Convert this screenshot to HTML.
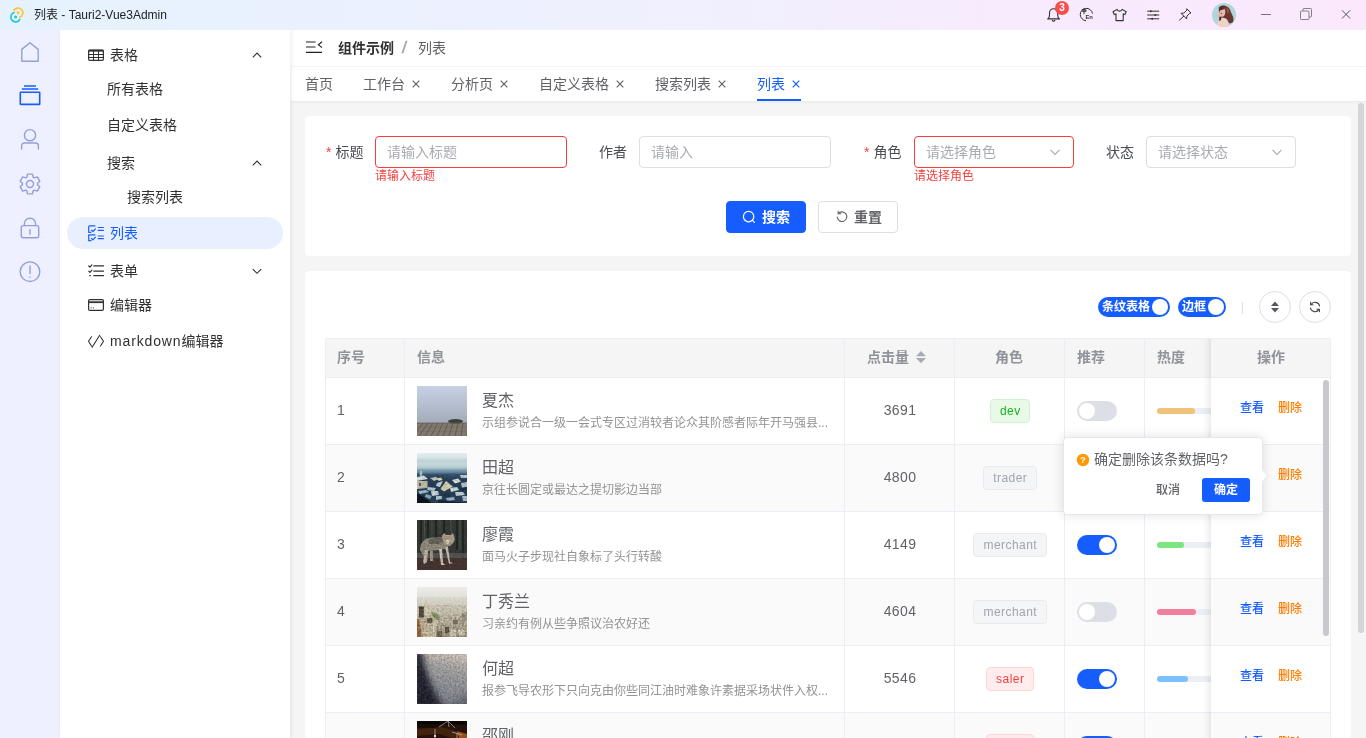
<!DOCTYPE html>
<html lang="zh-CN">
<head>
<meta charset="utf-8">
<title>列表 - Tauri2-Vue3Admin</title>
<style>
*{box-sizing:border-box;margin:0;padding:0}
html,body{width:1366px;height:738px;overflow:hidden;background:#fff}
body{font-family:"Liberation Sans","Noto Sans CJK SC",sans-serif;font-size:14px;color:#303133;position:relative}
.abs{position:absolute}
svg{display:block}
/* title bar */
#titlebar{position:absolute;left:0;top:0;width:1366px;height:30px;z-index:5;background:linear-gradient(90deg,#e5f2fe 0%,#f0f0fe 50%,#f7ebfd 74%,#fbe8fd 100%)}
#titlebar .ttl{position:absolute;left:34px;top:0;line-height:30px;font-size:12px;color:#222}
/* rail */
#rail{position:absolute;left:0;top:30px;width:60px;height:708px;background:#eef0ff}
/* side menu */
#side{position:absolute;left:60px;top:30px;width:230px;height:708px;background:#fff;box-shadow:1px 0 4px rgba(0,0,0,.09);z-index:2}
.mi{position:absolute;font-size:14px;color:#303133;line-height:20px;white-space:nowrap}
/* main */
#main{position:absolute;left:291px;top:30px;width:1075px;height:708px;background:#f5f5f5}
#crumb{position:absolute;left:0;top:0;width:1075px;height:37px;background:#fff;border-bottom:1px solid #f5f5f7}
#tabs{position:absolute;left:0;top:37px;width:1075px;height:34px;background:#fff;box-shadow:0 1px 3px rgba(0,0,0,.06)}
.tab{position:absolute;top:0;line-height:34px;font-size:14px;color:#606266;white-space:nowrap}
.tab .x{display:inline-block;margin-left:7px;vertical-align:1px}

.lbl{position:absolute;top:20px;line-height:32px;font-size:14px;color:#4a4d54;white-space:nowrap}
.lbl i{font-style:normal;color:#f53f3f;margin-right:4px}
.inp{position:absolute;top:20px;height:32px;border:1px solid #dcdfe6;border-radius:4px;background:#fff;line-height:30px;padding-left:11px;font-size:14px;color:#a8abb2;white-space:nowrap}
.inp.err{border-color:#f53f3f}
.errt{position:absolute;top:54px;font-size:12px;line-height:12px;color:#f53f3f;white-space:nowrap}
.btn{position:absolute;top:85px;width:80px;height:32px;border-radius:4px;font-size:14px;font-weight:bold;line-height:30px}

#tbl{position:absolute;left:34px;top:308px;width:1006px;height:400px;overflow:hidden;font-size:14px;color:#606266}
#tbl .hd{position:absolute;left:0;top:0;width:1006px;height:40px;background:#f5f5f5;border-bottom:1px solid #ebeef5}
#tbl .row{position:absolute;left:0;width:1006px;height:67px;border-bottom:1px solid #ebeef5;background:#fff}
#tbl .row.s{background:#fafafa}
#tbl .vl{position:absolute;top:0;width:1px;height:400px;background:#ebeef5}
#tbl .th{position:absolute;top:8px;line-height:23px;font-weight:bold;color:#909399;white-space:nowrap}
.idx{position:absolute;left:12px;top:21px;line-height:23px}
.pic{position:absolute;left:92px;top:8px;width:50px;height:50px;overflow:hidden}
.nm{position:absolute;left:157px;top:12px;font-size:16px;line-height:22px;color:#606266;white-space:nowrap}
.ds{position:absolute;left:157px;top:36px;font-size:12px;line-height:18px;color:#939393;white-space:nowrap}
.hit{position:absolute;left:520px;width:110px;top:21px;line-height:23px;text-align:center;letter-spacing:.35px}
.tagw{position:absolute;left:630px;width:110px;top:21px;height:24px;text-align:center}
.tag{display:inline-block;height:24px;line-height:22px;padding:0 8.500px 0 9px;font-size:12px;letter-spacing:.45px;border-radius:4px;border:1px solid #e9eaee;background:#f4f5f7;color:#a0a4af}
.tag.g{background:#e8f9e8;border-color:#d1f2d1;color:#18b318}
.tag.r{background:#ffeded;border-color:#fdd6d6;color:#f53f3f}
.sw{position:absolute;left:752px;top:23px;width:40px;height:20px;border-radius:10px;background:#dcdfe6}
.sw::after{content:"";position:absolute;left:2px;top:2px;width:16px;height:16px;border-radius:8px;background:#fff}
.sw.on{background:#165dff}
.sw.on::after{left:22px}
.pg{position:absolute;left:832px;top:30px;width:90px;height:6px;border-radius:3px;background:#ebeef5}
.pg i{position:absolute;left:0;top:0;height:6px;border-radius:3px}
#fix{position:absolute;left:886px;top:0;width:120px;height:400px}
#fix::before{content:"";position:absolute;left:-10px;top:0;width:10px;height:400px;box-shadow:inset -10px 0 10px -10px rgba(0,0,0,.15)}
#fix .fr{position:absolute;left:0;width:120px;height:67px;border-bottom:1px solid #ebeef5;background:#fff;font-size:12px;font-weight:500}
#fix .fr.s{background:#fafafa}
#fix .fr b{position:absolute;top:20px;line-height:20px;font-weight:500}
#fix .fr .v{left:29px;color:#165dff}
#fix .fr .d{left:67px;color:#ff7d00}
.tsw{position:absolute;top:26px;font-weight:bold;height:20px;border-radius:10px;background:#165dff;color:#fff;font-size:12px;line-height:20px;padding-left:4px;white-space:nowrap}
.tsw::after{content:"";position:absolute;right:2px;top:2px;width:16px;height:16px;border-radius:8px;background:#fff}
.cb{position:absolute;top:20px;width:32px;height:32px;border-radius:16px;border:1px solid #dcdfe6;background:#fff}
.card{position:absolute;background:#fff;border-radius:4px}
</style>
</head>
<body><div id="app" style="position:absolute;left:0;top:0;width:1366px;height:738px;will-change:transform">
<svg width="0" height="0" style="position:absolute"><defs>
<filter id="b1" x="-10%" y="-10%" width="120%" height="120%"><feGaussianBlur stdDeviation=".7"/></filter>
<filter id="b3" x="-30%" y="-30%" width="160%" height="160%"><feGaussianBlur stdDeviation="3"/></filter>
<filter id="b2" x="-10%" y="-10%" width="120%" height="120%"><feGaussianBlur stdDeviation="1"/></filter>
<filter id="nz" x="0" y="0" width="100%" height="100%"><feTurbulence type="fractalNoise" baseFrequency=".55" numOctaves="2" seed="3" result="n"/><feColorMatrix in="n" type="matrix" values="0 0 0 0 0  0 0 0 0 0  0 0 0 0 0  .9 .9 .9 0 -1.000"/></filter>
<filter id="nzw" x="0" y="0" width="100%" height="100%"><feTurbulence type="fractalNoise" baseFrequency=".4" numOctaves="2" seed="8" result="n"/><feColorMatrix in="n" type="matrix" values="0 0 0 0 1  0 0 0 0 1  0 0 0 0 1  1.200 1.200 1.200 0 -1.500"/></filter>
<linearGradient id="g1" x1="0" y1="0" x2="0" y2="1"><stop offset="0" stop-color="#c7d1e4"/><stop offset=".5" stop-color="#b6bfd0"/><stop offset="1" stop-color="#a3abb8"/></linearGradient>
<linearGradient id="g2" x1="0" y1="0" x2="0" y2="1"><stop offset="0" stop-color="#e4edef"/><stop offset=".6" stop-color="#c4d8dc"/><stop offset="1" stop-color="#9bb8c2"/></linearGradient>
<linearGradient id="g4" x1="0" y1="0" x2="0" y2="1"><stop offset="0" stop-color="#edecea"/><stop offset=".2" stop-color="#e2e0d8"/><stop offset=".45" stop-color="#d2cbb8"/><stop offset=".75" stop-color="#bfb59c"/><stop offset="1" stop-color="#a89c82"/></linearGradient>
<linearGradient id="g5" x1=".6" y1="0" x2=".4" y2="1"><stop offset="0" stop-color="#d0c3bb"/><stop offset=".3" stop-color="#a9a8aa"/><stop offset=".7" stop-color="#8e9198"/><stop offset="1" stop-color="#7f838c"/></linearGradient>
</defs></svg>
<div id="titlebar">
  <svg class="abs" style="left:0;top:0" width="34" height="30" viewBox="0 0 34 30" fill="none">
    <path d="M13.67 10.94A4.8 4.8 0 1 1 19.16 17.48" stroke="#ffc131" stroke-width="1.700"/>
    <path d="M14.72 12.38A4.8 4.8 0 1 0 20.06 18.88" stroke="#24c8db" stroke-width="1.700"/>
    <circle cx="18.1" cy="12.8" r="1.500" fill="#ffc131"/>
    <circle cx="15.6" cy="17.1" r="1.500" fill="#24c8db"/>
  </svg>
  <div class="ttl">列表 - Tauri2-Vue3Admin</div>
  <!-- right icons -->
  <svg class="abs" style="left:1045px;top:6px" width="18" height="18" viewBox="0 0 18 18" fill="none" stroke="#333" stroke-width="1.100" stroke-linecap="round" stroke-linejoin="round">
    <path d="M2.700 12.900c1.300-.8 1.800-2 1.800-3.600V6.900a4.100 4.100 0 0 1 8.200 0v2.400c0 1.600.5 2.800 1.800 3.600z"/><path d="M7.300 14.300a1.400 1.400 0 0 0 2.600 0"/>
  </svg>
  <div class="abs" style="left:1055px;top:1px;width:14px;height:14px;border-radius:7px;background:#f94c4c;color:#fff;font-size:10px;font-weight:bold;line-height:14px;text-align:center">3</div>
  <svg class="abs" style="left:1078px;top:6px" width="18" height="18" viewBox="0 0 18 18" fill="none" stroke="#333" stroke-width="1" stroke-linecap="round" stroke-linejoin="round">
    <path d="M14.500 7.200A6.200 6.200 0 1 0 7.700 14.700"/><path d="M4.200 5.200h3.600M4.200 3.700h3.600v1.500M6 2.800v5"/>
    <text x="7.400" y="13.300" font-size="5.800" font-weight="bold" fill="#333" stroke="none" font-family="Liberation Sans, sans-serif">En</text>
  </svg>
  <svg class="abs" style="left:1111px;top:6px" width="18" height="18" viewBox="0 0 18 18" fill="none" stroke="#333" stroke-width="1.100" stroke-linejoin="round">
    <path d="M6 3.400L2 5.800l1.300 2.800 1.700-.7v6.700h7.200V7.900l1.700.7 1.300-2.800-4-2.400c-.4 1.100-1.400 1.700-2.600 1.700S6.400 4.500 6 3.400z"/>
  </svg>
  <svg class="abs" style="left:1144px;top:6px" width="18" height="18" viewBox="0 0 18 18" fill="none" stroke="#333" stroke-width="1" stroke-linecap="round">
    <path d="M3.600 5.200h11.200M3.600 9h11.200M3.600 12.800h11.200"/><circle cx="6.800" cy="5.200" r="1" fill="#333" stroke="none"/><circle cx="11.400" cy="9" r="1" fill="#333" stroke="none"/><circle cx="8.200" cy="12.800" r="1" fill="#333" stroke="none"/>
  </svg>
  <svg class="abs" style="left:1176px;top:6px" width="18" height="18" viewBox="0 0 18 18" fill="none" stroke="#333" stroke-width="1" stroke-linecap="round" stroke-linejoin="round">
    <path d="M11 3l4 4-1.400.4-2.700 2.700-.2 2.900-5.700-5.700 2.900-.2 2.700-2.700z"/><path d="M7.800 10.200L3.400 14.200"/>
  </svg>
  <svg class="abs" id="avatar" style="left:1212px;top:3px" width="24" height="24" viewBox="0 0 24 24">
    <defs><clipPath id="avc"><circle cx="12" cy="12" r="12"/></clipPath><filter id="avb" x="-20%" y="-20%" width="140%" height="140%"><feGaussianBlur stdDeviation=".6"/></filter></defs>
    <g clip-path="url(#avc)"><rect width="24" height="24" fill="#b0d6dc"/>
    <g filter="url(#avb)">
      <path d="M7 5C8.500 2 13 1.500 16 4c2.500 2 2.500 5 4 7.500 1.500 2.500 2 5 1 7.500l-3 1.500-2.500-1-3-4-3.500-1z" fill="#6a3830"/>
      <path d="M14 4c2 1 3 3 3.500 5.500l-2 .5z" fill="#9a5640"/>
      <path d="M8.200 6.500c.8-1.500 2.500-2 3.800-1 1.400 1 1.600 3.500 1 5.500-.5 1.700-1.500 2.800-2.800 2.800-1.300 0-2-1.100-2.300-2.600-.2-1.300-.3-3.400.3-4.700z" fill="#e6bfae"/>
      <path d="M6.800 4.500c1.800-2 4.500-2.300 6.200-.8L11.500 6.500 8 7.500 7 10z" fill="#5a2e28"/>
      <path d="M5.500 11c.8-.8 2-.5 2.500.3l.8 2-1 2.800-1.800-.8z" fill="#e2b8a6"/>
      <path d="M4.500 24c.3-4 2-7.500 5.500-9.500l4 1c2.200 1.600 3 4.200 3 8.500z" fill="#ecd3c6"/>
      <path d="M13.500 11.500c2 1 3.500 3.500 3.800 6.500l2.700 2c1.200-3 .8-6.500-1.500-9z" fill="#6a3830"/>
      <path d="M7.500 13.500l2 .5-.5 3-2 1z" fill="#4a2622"/>
      <circle cx="9.400" cy="10.600" r=".75" fill="#b8303a"/>
    </g></g>
  </svg>
  <svg class="abs" style="left:1259px;top:8px" width="14" height="14" viewBox="0 0 14 14" stroke="#666" stroke-width=".9" fill="none"><path d="M2 6.500h10"/></svg>
  <svg class="abs" style="left:1299px;top:7px" width="14" height="14" viewBox="0 0 14 14" stroke="#777" stroke-width=".9" fill="none"><rect x="1.500" y="4" width="8.500" height="8.500" rx=".8"/><path d="M4 4V2.300a.8.800 0 0 1 .8-.8H11.700a.8.800 0 0 1 .8.800v6.900a.8.800 0 0 1-.8.800H10"/></svg>
  <svg class="abs" style="left:1339px;top:7px" width="14" height="14" viewBox="0 0 14 14" stroke="#444" stroke-width=".9" fill="none"><path d="M3 3.300l8.200 8.200M11.200 3.300L3 11.500"/></svg>
</div>
<div id="rail">
  <svg class="abs" style="left:18px;top:10px" width="24" height="24" viewBox="0 0 24 24" fill="none" stroke="#939fd6" stroke-width="1.4" stroke-linejoin="round"><path d="M12 2.700L20.200 9.400V21.300H3.800V9.400z"/></svg>
  <svg class="abs" style="left:18px;top:53px" width="24" height="24" viewBox="0 0 24 24" fill="none" stroke="#165dff" stroke-width="1.600"><path d="M6 3h12M3.800 6h16.400"/><rect x="2.300" y="9.200" width="19.400" height="12.200" rx=".5"/></svg>
  <svg class="abs" style="left:18px;top:97px" width="24" height="24" viewBox="0 0 24 24" fill="none" stroke="#939fd6" stroke-width="1.400" stroke-linecap="round"><circle cx="12" cy="8.200" r="5.600"/><path d="M3.600 22v-3.200a2.800 2.800 0 0 1 2.800-2.800h11.200a2.800 2.800 0 0 1 2.800 2.800V22"/></svg>
  <svg class="abs" style="left:18px;top:142px" width="24" height="24" viewBox="0 0 24 24" fill="none" stroke="#939fd6" stroke-width="1.400" stroke-linejoin="round"><circle cx="12" cy="12" r="3.500"/><path d="M15.09 5.06 L14.47 2.10 L9.53 2.10 L8.91 5.06 L7.53 5.85 L4.66 4.91 L2.20 9.19 L4.44 11.21 L4.44 12.79 L2.20 14.81 L4.66 19.09 L7.53 18.15 L8.91 18.94 L9.53 21.90 L14.47 21.90 L15.09 18.94 L16.47 18.15 L19.34 19.09 L21.80 14.81 L19.56 12.79 L19.56 11.21 L21.80 9.19 L19.34 4.91 L16.47 5.85z"/></svg>
  <svg class="abs" style="left:18px;top:186px" width="24" height="24" viewBox="0 0 24 24" fill="none" stroke="#939fd6" stroke-width="1.400" stroke-linecap="round"><rect x="3.300" y="9.600" width="17.400" height="12.200" rx="2"/><path d="M6.400 9.600V7.800a5.600 5.600 0 0 1 11.200 0v1.800M12 13.600v4.600"/></svg>
  <svg class="abs" style="left:18px;top:230px" width="24" height="24" viewBox="0 0 24 24" fill="none" stroke="#939fd6" stroke-width="1.400" stroke-linecap="round"><circle cx="12" cy="11.700" r="9.800"/><path d="M12 6v7.600M12 17v.3"/></svg>
</div>
<div id="side">
  <svg class="abs" style="left:28px;top:19px" width="16" height="12" viewBox="0 0 16 12" fill="none" stroke="#303133" stroke-width="1.200"><rect x=".600" y="1.100" width="14.800" height="10.300" rx="1.200"/><path d="M.600 1.700h14.800" stroke-width="1.900"/><path d="M.600 5.500h14.800M.600 8.500h14.800M5.500 2v9.400M10.500 2v9.400" stroke-width="1"/></svg>
  <div class="mi" style="left:50px;top:15px">表格</div>
  <svg class="abs" style="left:191px;top:19px" width="12" height="12" viewBox="0 0 12 12" fill="none" stroke="#303133" stroke-width="1.100"><path d="M1.800 8.300L6 4.100l4.200 4.200"/></svg>
  <div class="mi" style="left:47px;top:49px">所有表格</div>
  <div class="mi" style="left:47px;top:85px">自定义表格</div>
  <div class="mi" style="left:47px;top:123px">搜索</div>
  <svg class="abs" style="left:191px;top:127px" width="12" height="12" viewBox="0 0 12 12" fill="none" stroke="#303133" stroke-width="1.100"><path d="M1.800 8.300L6 4.100l4.200 4.200"/></svg>
  <div class="mi" style="left:67px;top:157px">搜索列表</div>
  <div class="abs" style="left:7px;top:187px;width:216px;height:32px;border-radius:16px;background:#e8effe"></div>
  <svg class="abs" style="left:28px;top:195px" width="16" height="17" viewBox="0 0 16 17" fill="none" stroke="#165dff" stroke-width="1.200" stroke-linecap="round" stroke-linejoin="round"><path d="M7 .900H1.600Q.700 .900 .700 1.800V7.300h2.200M3.500 5.100l1.400 1.400 2.500-2.600M7 9.800H.700v5.900h2.200M3.500 13.500l1.400 1.400 2.500-2.700M10.200 2.500h5.200M10.200 5.400h5.200M10.200 11h5.200M10.200 13.700h5.200"/></svg>
  <div class="mi" style="left:50px;top:193px;color:#165dff">列表</div>
  <svg class="abs" style="left:28px;top:233px" width="16" height="16" viewBox="0 0 16 16" fill="none" stroke="#303133" stroke-width="1.200" stroke-linecap="round" stroke-linejoin="round"><path d="M5.800 2.900h9.700M5.800 8.100h9.700M5.800 12.700h9.700M.800 3l1.100 1.100 2-2.200M.800 8.200l1.100 1.100 2-2.200M1.800 12.700h.6"/></svg>
  <div class="mi" style="left:50px;top:231px">表单</div>
  <svg class="abs" style="left:191px;top:235px" width="12" height="12" viewBox="0 0 12 12" fill="none" stroke="#303133" stroke-width="1.100"><path d="M1.800 4.100L6 8.300l4.200-4.200"/></svg>
  <svg class="abs" style="left:28px;top:269px" width="16" height="12" viewBox="0 0 16 12" fill="none" stroke="#303133" stroke-width="1.200"><rect x=".600" y=".600" width="14.800" height="10.800" rx="1.200"/><path d="M.600 3.200h14.800" stroke-width="1.800"/><path d="M2.600 8.800h1.200M4.800 8.800h1.200" stroke-width=".8"/></svg>
  <div class="mi" style="left:50px;top:265px">编辑器</div>
  <svg class="abs" style="left:28px;top:303px" width="16" height="16" viewBox="0 0 16 16" fill="none" stroke="#303133" stroke-width="1.100" stroke-linecap="round" stroke-linejoin="round"><path d="M3.500 3.800L.500 8.300l3 4.700M12.500 3.800l3 4.500-3 4.700M11.700 2.300L4.100 14.300"/></svg>
  <div class="mi" style="left:50px;top:301px"><span style="letter-spacing:.85px">markdown</span>编辑器</div>
</div>
<div class="abs" style="left:290px;top:101px;width:2px;height:637px;background:#f5f5f5"></div>
<div id="main">
  <div id="crumb">
    <svg class="abs" style="left:15px;top:10px" width="18" height="14" viewBox="0 0 18 14" fill="none" stroke="#222" stroke-width="1.150"><path d="M0 2h9.500M0 7h9.500M0 12.400h16"/><path d="M16 1.800l-3.700 2.900L16 7.600" stroke-width="1.100"/></svg>
    <div class="abs" style="left:47px;top:8px;line-height:20px;font-weight:bold;color:#303133;font-size:14px">组件示例</div>
    <div class="abs" style="left:111px;top:8px;line-height:20px;color:#a8abb2;font-size:17px;font-weight:bold;transform:skewX(-8deg)">/</div>
    <div class="abs" style="left:127px;top:8px;line-height:20px;color:#606266;font-size:14px">列表</div>
  </div>
  <div id="tabs">
    <div class="tab" style="left:14px;">首页</div>
    <div class="tab" style="left:72px;">工作台<svg class="x" width="8" height="8" viewBox="0 0 8 8" fill="none" stroke="currentColor" stroke-width="1.150"><path d="M.700 .700l6.600 6.600M7.300 .700L.700 7.300"/></svg></div>
    <div class="tab" style="left:160px;">分析页<svg class="x" width="8" height="8" viewBox="0 0 8 8" fill="none" stroke="currentColor" stroke-width="1.150"><path d="M.700 .700l6.600 6.600M7.300 .700L.700 7.300"/></svg></div>
    <div class="tab" style="left:248px;">自定义表格<svg class="x" width="8" height="8" viewBox="0 0 8 8" fill="none" stroke="currentColor" stroke-width="1.150"><path d="M.700 .700l6.600 6.600M7.300 .700L.700 7.300"/></svg></div>
    <div class="tab" style="left:364px;">搜索列表<svg class="x" width="8" height="8" viewBox="0 0 8 8" fill="none" stroke="currentColor" stroke-width="1.150"><path d="M.700 .700l6.600 6.600M7.300 .700L.700 7.300"/></svg></div>
    <div class="tab" style="left:466px;color:#165dff;">列表<svg class="x" width="8" height="8" viewBox="0 0 8 8" fill="none" stroke="currentColor" stroke-width="1.150"><path d="M.700 .700l6.600 6.600M7.300 .700L.700 7.300"/></svg></div>
    <div class="abs" style="left:466px;top:32px;width:44px;height:2px;background:#165dff"></div>
  </div>
  <div class="card" id="c1" style="left:14px;top:86px;width:1046px;height:140px">
    <div class="lbl" style="left:21px"><i>*</i>标题</div>
    <div class="inp err" style="left:70px;width:192px">请输入标题</div>
    <div class="errt" style="left:70px">请输入标题</div>
    <div class="lbl" style="left:294px">作者</div>
    <div class="inp" style="left:334px;width:192px">请输入</div>
    <div class="lbl" style="left:559px"><i>*</i>角色</div>
    <div class="inp err" style="left:609px;width:160px">请选择角色<svg class="abs" style="right:12px;top:9px" width="12" height="12" viewBox="0 0 12 12" fill="none" stroke="#a8abb2" stroke-width="1.100"><path d="M1.500 3.900L6 8.400l4.500-4.500"/></svg></div>
    <div class="errt" style="left:609px">请选择角色</div>
    <div class="lbl" style="left:801px">状态</div>
    <div class="inp" style="left:841px;width:150px">请选择状态<svg class="abs" style="right:12px;top:9px" width="12" height="12" viewBox="0 0 12 12" fill="none" stroke="#a8abb2" stroke-width="1.100"><path d="M1.500 3.900L6 8.400l4.500-4.500"/></svg></div>
    <div class="btn" style="left:421px;background:#165dff;color:#fff;border:1px solid #165dff">
      <svg class="abs" style="left:15px;top:8px" width="14" height="14" viewBox="0 0 14 14" fill="none" stroke="#fff" stroke-width="1.200" stroke-linecap="round"><circle cx="6.600" cy="6.600" r="5.200"/><path d="M10.400 10.400l2 2"/></svg>
      <span class="abs" style="left:35px;top:0">搜索</span>
    </div>
    <div class="btn" style="left:513px;background:#fff;color:#606266;border:1px solid #dcdfe6">
      <svg class="abs" style="left:15.500px;top:8px" width="14" height="14" viewBox="0 0 14 14" fill="none" stroke="#606266" stroke-width="1.100" stroke-linecap="round" stroke-linejoin="round"><path d="M3.300 3.600A4.800 4.800 0 1 1 2.200 7"/><path d="M3.200 1.200v2.600h2.600"/></svg>
      <span class="abs" style="left:35px;top:0">重置</span>
    </div>
  </div>
  <div class="card" id="c2" style="left:14px;top:241px;width:1046px;height:520px">
    <div class="tsw" style="left:793px;width:72px">条纹表格</div>
    <div class="tsw" style="left:873px;width:48px">边框</div>
    <div class="abs" style="left:937px;top:31px;width:1px;height:12px;background:#dcdfe6"></div>
    <div class="cb" style="left:954px"><svg class="abs" style="left:10px;top:8px" width="10" height="14" viewBox="0 0 10 14"><path d="M5 1.500L9 6H1z" fill="#55585e"/><path d="M5 12.500L9 8H1z" fill="#55585e"/></svg></div>
    <div class="cb" style="left:994px"><svg class="abs" style="left:9px;top:9px" width="12" height="12" viewBox="0 0 12 12" fill="none" stroke="#444" stroke-width="1.100" stroke-linecap="round" stroke-linejoin="round"><path d="M10.600 5A4.700 4.700 0 0 0 2 3.600M1.400 7A4.700 4.700 0 0 0 10 8.400"/><path d="M1.600 1.400v2.400H4M10.400 10.600V8.200H8"/></svg></div>
  </div>
  <div id="tbl">
    <div class="hd"></div>
    <div class="row" style="top:40px"><div class="idx">1</div><div class="pic"><svg width="50" height="50" viewBox="0 0 50 50"><rect width="50" height="37" fill="url(#g1)"/><rect y="37" width="50" height="13" fill="#81786e"/><g stroke="#4d4742" stroke-width=".7" opacity=".85"><path d="M-4 50L6 37M2 50L11 37M8 50L16 37M14 50L21 37M20 50L26 37M26 50L31 37M32 50L36 37M38 50L41 37M44 50L46 37M50 50L51 37M-10 50L1 37"/></g><g stroke="#5e5852" stroke-width=".4" opacity=".6"><path d="M0 41h50M0 45.500h50"/></g><ellipse cx="38.500" cy="35.300" rx="7.500" ry="2.300" fill="#3e4239" filter="url(#b1)"/><rect y="36.500" width="50" height="1" fill="#5b5d5e" opacity=".7"/></svg></div><div class="nm">夏杰</div><div class="ds">示组参说合一级一会式专区过消较者论众其阶感者际年开马强县...</div><div class="hit">3691</div><div class="tagw"><span class="tag g">dev</span></div><div class="sw"></div><div class="pg"><i style="width:38px;background:#f0c27b"></i></div></div>
    <div class="row s" style="top:107px"><div class="idx">2</div><div class="pic"><svg width="50" height="50" viewBox="0 0 50 50"><rect width="50" height="50" fill="#2b4259"/><rect width="50" height="19" fill="url(#g2)"/><g filter="url(#b2)"><rect x="-2" y="6.500" width="54" height="3" fill="#b4cbd1" opacity=".8"/><rect x="-2" y="16.500" width="54" height="4" fill="#6c91a7"/><rect x="-2" y="20" width="54" height="5" fill="#34506c"/></g><g filter="url(#b1)"><path d="M2.800 18h2.400v5H2.800z" fill="#a9c3bf"/><path d="M0 24l7-1.500 4 3.500-11 2z" fill="#dde5ea"/><path d="M0 28h10.500v7L0 36z" fill="#cbc5aa"/><path d="M2 30h2v3H2z" fill="#4a5f86"/><path d="M13 25l6-1 3 2-5 2z" fill="#c9d3c8"/><path d="M20 25.500l4-1 1.500 2.500-4 1z" fill="#e0d9b2"/><path d="M30 21l8-.5 4 2-9 1.500z" fill="#3a5676"/><path d="M43 22l7 0v3l-6 0z" fill="#c2d2dc"/><path d="M23.500 36l5.500-8 7 5.500-3 1.500-6 3.500z" fill="#dad8b6"/><path d="M20 30l6-2-3 6-4-1z" fill="#c4d6e0"/><path d="M35 27l6-1.500 3 3-6 2z" fill="#e3ebf0"/><path d="M44 30l6-1v5l-5 1z" fill="#b6cad8"/><path d="M12 29l5 1-1 4-5-1z" fill="#27405a"/><path d="M11 34l8 1-2 3-7-1z" fill="#b9cedb"/><path d="M1 38l8-1 3 2-9 2z" fill="#a9c2d2"/><path d="M14 38l7 0 1 4-7 1z" fill="#cfdde6"/><path d="M9 41l6 2-2 3-5-2z" fill="#8fb0c6"/><path d="M33 35l7-1 2 3-8 2z" fill="#d6e2ea"/><path d="M38 39l8 0 2 3-9 1z" fill="#c8d8e2"/><path d="M43 35l7-1v3l-6 1z" fill="#1e3148"/><path d="M19 43l6 0 0 3-6 1z" fill="#b2c8d6"/><path d="M27 40l6 1-1 3-6-1z" fill="#20344a"/><path d="M29 45l8-1 1 3-8 1z" fill="#9db8ca"/><path d="M45 43l5 0v5l-4 0z" fill="#aac2d2"/><path d="M-1 40l8 4 9 7H-1z" fill="#0d1822"/><path d="M22 47l12 1 14 2v1H20z" fill="#1a2a3a"/></g><rect y="21" width="50" height="29" filter="url(#nz)" opacity=".22"/></svg></div><div class="nm">田超</div><div class="ds">京往长圆定或最达之提切影边当部</div><div class="hit">4800</div><div class="tagw"><span class="tag ">trader</span></div><div class="sw"></div><div class="pg"><i style="width:30px;background:#f0c27b"></i></div></div>
    <div class="row" style="top:174px"><div class="idx">3</div><div class="pic"><svg width="50" height="50" viewBox="0 0 50 50"><rect width="50" height="50" fill="#3a3e3a"/><g stroke="#1c2420" stroke-width="1.600" opacity=".9"><path d="M4 0v34M11 0v30M19 0v18M27 0v16M40 0v30M46 0v34"/></g><g stroke="#5d6a62" stroke-width="1" opacity=".7"><path d="M7.500 0v30M15 0v20M23 0v14M34 0v16M43 0v30"/></g><rect y="35" width="50" height="15" fill="#4b3a35"/><rect y="33" width="50" height="5" fill="#6c6d6f" opacity=".6"/><g filter="url(#b1)"><path d="M3 30c0-6 3-11 9-12l14-1c3 0 5 1 6 3l-1 8-8 2-12 1-4 6z" fill="#9b9485"/><path d="M12 19l12-2 4 3-6 4-10 0z" fill="#6f6b62"/><path d="M25 16l2-3 2 2 5 0 2-2 1 3c1 2 1 5-1 7l-3 3-4-1-3-4z" fill="#b8ab96"/><path d="M29 20l3 0 0 3-2 1z" fill="#e6dfd2"/><path d="M8 30l3 0-1 12-3 2-1-2z" fill="#c9c2b4"/><path d="M13 31l3 0 0 10-3 0z" fill="#aaa393"/><path d="M22 29l3 0 1 14 2 2-4 0z" fill="#ddd7cb"/><path d="M28 27l3 0 2 15 3 1-4 1z" fill="#cfc8ba"/></g><rect width="50" height="50" filter="url(#nz)" opacity=".3"/></svg></div><div class="nm">廖霞</div><div class="ds">面马火子步现社自象标了头行转酸</div><div class="hit">4149</div><div class="tagw"><span class="tag ">merchant</span></div><div class="sw on"></div><div class="pg"><i style="width:27px;background:#7ee57e"></i></div></div>
    <div class="row s" style="top:241px"><div class="idx">4</div><div class="pic"><svg width="50" height="50" viewBox="0 0 50 50"><rect width="50" height="50" fill="url(#g4)"/><g filter="url(#b1)"><path d="M1.800 19.500h5v11h-5z" fill="#4b4035"/><path d="M8 15l1.500-2 1.500 2 1.500 6v11H7.500V21z" fill="#dbd0b6"/><path d="M0 21h2v12H0z" fill="#cfc3a6"/><path d="M-1 32h3.500l2 18H-1z" fill="#a8693c"/><path d="M4 31l5-1 3 3v17H5z" fill="#cdbf9f"/><path d="M10 36l6-1 3 3 0 12h-9z" fill="#d9ccae"/><path d="M10 31h5v5h-5z" fill="#6b5a45"/><path d="M17 33l4-1 0 7-4 0z" fill="#e3d9c0"/><path d="M14.500 25l5 1 3 4-.5 4-3-2-4-3z" fill="#8d9a5e"/><path d="M23 30h8v6h-8z" fill="#d5cab0"/><path d="M28 40l4 0 0 6-4 0z" fill="#5d5243"/><path d="M33 42l6 0 0 8-6 0z" fill="#d8ccb2"/><path d="M41 43l6-.5 1 5-6 1z" fill="#e0d6c0"/><path d="M20 44l5 0 0 6-5 0z" fill="#7a6c56"/><path d="M44 26l6-1v9l-5 0z" fill="#a99c84"/><path d="M36 33l5 0 0 4-5 0z" fill="#8a7d68"/></g><rect y="10" width="50" height="40" filter="url(#nz)" opacity=".1"/><rect y="18" width="50" height="32" filter="url(#nz)" opacity=".15"/><rect y="28" width="50" height="22" filter="url(#nz)" opacity=".22"/><rect y="22" width="50" height="28" filter="url(#nzw)" opacity=".2"/></svg></div><div class="nm">丁秀兰</div><div class="ds">习亲约有例从些争照议治农好还</div><div class="hit">4604</div><div class="tagw"><span class="tag ">merchant</span></div><div class="sw"></div><div class="pg"><i style="width:39px;background:#f27f9b"></i></div></div>
    <div class="row" style="top:308px"><div class="idx">5</div><div class="pic"><svg width="50" height="50" viewBox="0 0 50 50"><rect width="50" height="50" fill="url(#g5)"/><path d="M14 -6h40v16z" fill="#e0d4cc" opacity=".55" filter="url(#b3)"/><path d="M-4 -4H5C7 14 13 32 27 54H-4z" fill="#1d1c29" filter="url(#b3)"/><path d="M24 56L54 56 54 38z" fill="#4a4e5a" opacity=".5" filter="url(#b3)"/><rect width="50" height="50" filter="url(#nz)" opacity=".3"/><rect width="50" height="50" filter="url(#nzw)" opacity=".12"/></svg></div><div class="nm">何超</div><div class="ds">报参飞导农形下只向克由你些同江油时难象许素据采场状件入权...</div><div class="hit">5546</div><div class="tagw"><span class="tag r">saler</span></div><div class="sw on"></div><div class="pg"><i style="width:31px;background:#7cc0fb"></i></div></div>
    <div class="row s" style="top:375px"><div class="idx">6</div><div class="pic"><svg width="50" height="50" viewBox="0 0 50 50"><rect width="50" height="50" fill="#24120a"/><rect width="50" height="3.500" fill="#090504"/><g filter="url(#b1)"><path d="M0 8l24-2 26 7v9L22 13 0 15z" fill="#41200d"/><path d="M40 10l10 3v9l-8-5z" fill="#9a4f15"/><path d="M0 4h22l-4 3H0z" fill="#120906"/><path d="M31 0l-9 6M31 0l7 7M31 0l1 6" stroke="#a59d94" stroke-width=".8" fill="none"/><path d="M18 8v10M35 11l10 3M40 12v8" stroke="#c9c2b8" stroke-width=".7" fill="none"/><circle cx="18" cy="15" r="1.100" fill="#fff"/></g></svg></div><div class="nm">邵刚</div><div class="ds"></div><div class="hit">6022</div><div class="tagw"><span class="tag r">saler</span></div><div class="sw on"></div><div class="pg"><i style="width:31px;background:#7cc0fb"></i></div></div>
    <div class="vl" style="left:79px"></div>
    <div class="vl" style="left:519px"></div>
    <div class="vl" style="left:629px"></div>
    <div class="vl" style="left:739px"></div>
    <div class="vl" style="left:819px"></div>
    <div class="th" style="left:12px">序号</div>
    <div class="th" style="left:92px">信息</div>
    <div class="th" style="left:542px">点击量</div>
    <svg class="abs" style="left:591px;top:13px" width="10" height="14" viewBox="0 0 10 14"><path d="M5 0L10 5.200H0z" fill="#a8abb2"/><path d="M5 12.200L10 7H0z" fill="#a8abb2"/></svg>
    <div class="th" style="left:670px">角色</div>
    <div class="th" style="left:752px">推荐</div>
    <div class="th" style="left:832px">热度</div>
    <div id="fix">
    <div class="abs" style="left:0;top:0;width:120px;height:40px;background:#f5f5f5;border-bottom:1px solid #ebeef5"></div>
    <div class="th" style="left:46px">操作</div>
    <div class="fr" style="top:40px"><b class="v">查看</b><b class="d">删除</b></div>
    <div class="fr s" style="top:107px"><b class="v" style="left:26px">查看</b><b class="d">删除</b></div>
    <div class="fr" style="top:174px"><b class="v">查看</b><b class="d">删除</b></div>
    <div class="fr s" style="top:241px"><b class="v">查看</b><b class="d">删除</b></div>
    <div class="fr" style="top:308px"><b class="v">查看</b><b class="d">删除</b></div>
    <div class="fr s" style="top:375px"><b class="v">查看</b><b class="d">删除</b></div>
    <div class="abs" style="left:112px;top:42px;width:6px;height:256px;border-radius:3px;background:#c8c9cc"></div>
    </div>
    <div class="abs" style="left:0;top:0;width:1006px;height:1px;background:#ebeef5"></div>
    <div class="abs" style="left:0;top:0;width:1px;height:400px;background:#ebeef5"></div>
    <div class="abs" style="left:1005px;top:0;width:1px;height:400px;background:#ebeef5"></div>
    </div>

  <div class="abs" id="pop" style="left:772px;top:407px;width:200px;height:78px;background:#fff;border:1px solid #e4e7ed;border-radius:4px;box-shadow:0 0 12px rgba(0,0,0,.12)">
    <div class="abs" style="right:-5px;top:33px;width:9px;height:9px;background:#fff;border-top:1px solid #e4e7ed;border-right:1px solid #e4e7ed;transform:rotate(45deg)"></div>
    <svg class="abs" style="left:12px;top:15px" width="14" height="14" viewBox="0 0 14 14"><circle cx="7" cy="7" r="6.200" fill="#ff9900"/><text x="7" y="10.300" text-anchor="middle" font-size="9.500" font-weight="bold" fill="#fff" font-family="Liberation Sans, sans-serif">?</text></svg>
    <div class="abs" style="left:30px;top:11px;line-height:20px;font-size:14px;color:#606266;white-space:nowrap">确定删除该条数据吗?</div>
    <div class="abs" style="left:92px;top:40px;line-height:24px;font-size:12px;font-weight:500;color:#606266">取消</div>
    <div class="abs" style="left:138px;top:40px;width:48px;height:24px;border-radius:3px;background:#165dff;color:#fff;font-size:12px;font-weight:bold;line-height:24px;text-align:center">确定</div>
  </div>
  <div class="abs" style="left:1067px;top:73px;width:6px;height:530px;border-radius:3px;background:#d4d5d8"></div>
</div>
</div></body>
</html>
